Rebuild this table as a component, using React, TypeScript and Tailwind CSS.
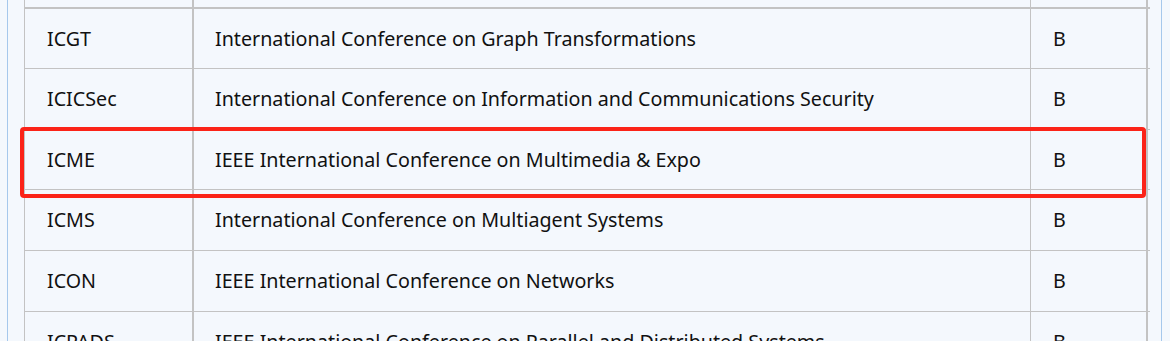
import React from "react";

const rows = [
  { h: "h-[61px]", a: "ICGT", n: "International Conference on Graph Transformations", r: "B" },
  { h: "h-[61px]", a: "ICICSec", n: "International Conference on Information and Communications Security", r: "B" },
  { h: "h-[60px]", a: "ICME", n: "IEEE International Conference on Multimedia & Expo", r: "B" },
  { h: "h-[61px]", a: "ICMS", n: "International Conference on Multiagent Systems", r: "B" },
  { h: "h-[61px]", a: "ICON", n: "IEEE International Conference on Networks", r: "B" },
  { h: "h-[61px]", a: "ICPADS", n: "IEEE International Conference on Parallel and Distributed Systems", r: "B" },
];

function Row({ h, a, n, r, top }: { h: string; a: string; n: string; r: string; top: string }) {
  return (
    <div className={`flex shrink-0 ${h} ${top} border-[#c3c3c3] items-center`}>
      <div className="w-[168px] h-full flex items-center pl-[22px] border-l border-[#c3c3c3]">{a}</div>
      <div className="w-[838px] h-full flex items-center pl-[21px] border-l-2 border-[#c3c3c3]">{n}</div>
      <div className="w-[118px] h-full flex items-center pl-[22px] border-l border-r-2 border-[#c3c3c3]">{r}</div>
    </div>
  );
}

export default function App() {
  return (
    <div
      className="relative w-[1170px] h-[341px] overflow-hidden bg-[#f4f8fd] text-[19.7px] text-[#111]"
      style={{ fontFamily: '"Noto Sans", "Open Sans", sans-serif' }}
    >
      <div className="flex h-full">
        <div className="w-[7px] shrink-0" />
        <div className="w-px h-full shrink-0 bg-[#a6c8ec]" />
        <div className="w-[16px] shrink-0" />
        <div className="w-[1126px] shrink-0 flex flex-col">
          <div className="flex shrink-0 h-[7px]">
            <div className="w-[168px] border-l border-[#c3c3c3]" />
            <div className="w-[838px] border-l-2 border-[#c3c3c3]" />
            <div className="w-[118px] border-l border-r-2 border-[#c3c3c3]" />
          </div>
          {rows.map((row, i) => (
            <Row key={row.a} {...row} top={i === 0 ? "border-t-2" : "border-t"} />
          ))}
        </div>
        <div className="w-[11px] shrink-0" />
        <div className="w-px h-full shrink-0 bg-[#a6c8ec]" />
      </div>
      <div className="absolute left-[20px] top-[127px] w-[1126px] h-[71px] border-4 border-[#fb2318] rounded-[4px]" />
    </div>
  );
}
